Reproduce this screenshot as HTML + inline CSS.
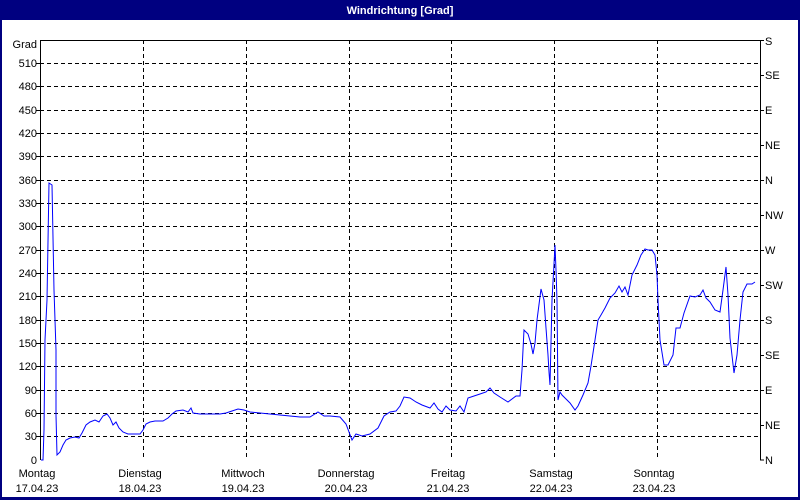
<!DOCTYPE html>
<html><head><meta charset="utf-8"><style>
html,body{margin:0;padding:0;width:800px;height:500px;overflow:hidden;background:#fff}
svg{display:block}
text{font-family:"Liberation Sans",sans-serif;font-size:11px;fill:#000}
</style></head><body>
<svg width="800" height="500" xmlns="http://www.w3.org/2000/svg">
<rect x="0" y="0" width="800" height="500" fill="#000080"/>
<rect x="2" y="20" width="796" height="477" fill="#fff"/>
<text x="400" y="14" text-anchor="middle" style="fill:#fff;font-weight:bold">Windrichtung [Grad]</text>
<g stroke="#000" stroke-width="1" stroke-dasharray="4,3" shape-rendering="crispEdges">
<line x1="40" y1="63.5" x2="760" y2="63.5"/><line x1="40" y1="86.5" x2="760" y2="86.5"/>
<line x1="40" y1="110.5" x2="760" y2="110.5"/><line x1="40" y1="133.5" x2="760" y2="133.5"/>
<line x1="40" y1="156.5" x2="760" y2="156.5"/><line x1="40" y1="180.5" x2="760" y2="180.5"/>
<line x1="40" y1="203.5" x2="760" y2="203.5"/><line x1="40" y1="226.5" x2="760" y2="226.5"/>
<line x1="40" y1="250.5" x2="760" y2="250.5"/><line x1="40" y1="273.5" x2="760" y2="273.5"/>
<line x1="40" y1="296.5" x2="760" y2="296.5"/><line x1="40" y1="320.5" x2="760" y2="320.5"/>
<line x1="40" y1="343.5" x2="760" y2="343.5"/><line x1="40" y1="366.5" x2="760" y2="366.5"/>
<line x1="40" y1="390.5" x2="760" y2="390.5"/><line x1="40" y1="413.5" x2="760" y2="413.5"/>
<line x1="40" y1="436.5" x2="760" y2="436.5"/>
<line x1="143.5" y1="40" x2="143.5" y2="460"/><line x1="246.5" y1="40" x2="246.5" y2="460"/>
<line x1="349.5" y1="40" x2="349.5" y2="460"/><line x1="451.5" y1="40" x2="451.5" y2="460"/>
<line x1="554.5" y1="40" x2="554.5" y2="460"/><line x1="657.5" y1="40" x2="657.5" y2="460"/>
</g>
<g stroke="#000" shape-rendering="crispEdges">
<polyline points="40.5,460 40.5,40.5 760.5,40.5 760.5,460" fill="none"/>
<line x1="36" y1="63.5" x2="40" y2="63.5"/><line x1="36" y1="86.5" x2="40" y2="86.5"/><line x1="36" y1="110.5" x2="40" y2="110.5"/><line x1="36" y1="133.5" x2="40" y2="133.5"/><line x1="36" y1="156.5" x2="40" y2="156.5"/><line x1="36" y1="180.5" x2="40" y2="180.5"/><line x1="36" y1="203.5" x2="40" y2="203.5"/><line x1="36" y1="226.5" x2="40" y2="226.5"/><line x1="36" y1="250.5" x2="40" y2="250.5"/><line x1="36" y1="273.5" x2="40" y2="273.5"/><line x1="36" y1="296.5" x2="40" y2="296.5"/><line x1="36" y1="320.5" x2="40" y2="320.5"/><line x1="36" y1="343.5" x2="40" y2="343.5"/><line x1="36" y1="366.5" x2="40" y2="366.5"/><line x1="36" y1="390.5" x2="40" y2="390.5"/><line x1="36" y1="413.5" x2="40" y2="413.5"/><line x1="36" y1="436.5" x2="40" y2="436.5"/>
<line x1="760" y1="40.5" x2="764" y2="40.5"/><line x1="760" y1="75.5" x2="764" y2="75.5"/><line x1="760" y1="110.5" x2="764" y2="110.5"/><line x1="760" y1="145.5" x2="764" y2="145.5"/><line x1="760" y1="180.5" x2="764" y2="180.5"/><line x1="760" y1="215.5" x2="764" y2="215.5"/><line x1="760" y1="250.5" x2="764" y2="250.5"/><line x1="760" y1="285.5" x2="764" y2="285.5"/><line x1="760" y1="320.5" x2="764" y2="320.5"/><line x1="760" y1="355.5" x2="764" y2="355.5"/><line x1="760" y1="390.5" x2="764" y2="390.5"/><line x1="760" y1="425.5" x2="764" y2="425.5"/><line x1="760" y1="460" x2="764" y2="460"/>
</g>
<g text-anchor="end">
<text x="37" y="48">Grad</text>
<text x="37" y="67">510</text><text x="37" y="90">480</text><text x="37" y="114">450</text><text x="37" y="137">420</text><text x="37" y="160">390</text><text x="37" y="184">360</text><text x="37" y="207">330</text><text x="37" y="230">300</text><text x="37" y="254">270</text><text x="37" y="277">240</text><text x="37" y="300">210</text><text x="37" y="324">180</text><text x="37" y="347">150</text><text x="37" y="370">120</text><text x="37" y="394">90</text><text x="37" y="417">60</text><text x="37" y="440">30</text><text x="37" y="464">0</text>
</g>
<g>
<text x="765" y="45">S</text><text x="765" y="79">SE</text><text x="765" y="114">E</text><text x="765" y="149">NE</text><text x="765" y="184">N</text><text x="765" y="219">NW</text><text x="765" y="254">W</text><text x="765" y="289">SW</text><text x="765" y="324">S</text><text x="765" y="359">SE</text><text x="765" y="394">E</text><text x="765" y="429">NE</text><text x="765" y="464">N</text>
</g>
<g text-anchor="middle">
<text x="37" y="477">Montag</text><text x="37" y="492">17.04.23</text>
<text x="140" y="477">Dienstag</text><text x="140" y="492">18.04.23</text>
<text x="243" y="477">Mittwoch</text><text x="243" y="492">19.04.23</text>
<text x="346" y="477">Donnerstag</text><text x="346" y="492">20.04.23</text>
<text x="448" y="477">Freitag</text><text x="448" y="492">21.04.23</text>
<text x="551" y="477">Samstag</text><text x="551" y="492">22.04.23</text>
<text x="654" y="477">Sonntag</text><text x="654" y="492">23.04.23</text>
</g>
<polyline fill="none" stroke="#0000ff" stroke-width="1" points="41,460 43,460 44,430 45,340 47,300 49,183 52,185 54,290 56,350 56,415 57,455 60,452 63,445 66,440 70,438 75,437 79,438 82,433 86,425 90,422 95,420 99,422 103,416 107,414 110,418 113,425 116,422 119,428 123,432 128,434 134,434 140,434 143,430 146,424 150,422 155,421 163,421 168,418 172,414 176,411 183,410 188,412 191,408 193,413 200,414 212,414 220,414 226,413 232,411 238,409 244,410 250,412 260,413 270,414 280,415 290,416 300,417 310,417 318,412 324,416 330,416 340,417 346,424 352,440 356,434 362,436 370,434 378,428 384,416 390,412 396,411 400,406 404,397 410,398 416,402 422,405 430,408 434,403 438,409 442,412 446,406 450,410 456,411 460,406 464,412 468,398 474,396 480,394 486,392 490,388 494,393 500,397 508,402 516,396 520,396 522,370 524,330 528,334 531,344 533,354 535,343 537,320 541,289 544,300 546,328 548,355 549,372 550,385 552,300 554,264 555,245 556,270 557,300 558,400 560,392 562,395 565,398 570,403 575,410 578,406 583,395 588,383 591,366 595,340 598,320 601,315 605,308 610,298 615,293 619,286 622,292 625,287 628,295 632,275 637,265 641,255 645,249 648,250 652,250 655,255 657,275 658,300 660,340 664,365 668,365 673,355 676,328 680,328 684,313 690,296 695,297 700,295 703,290 706,298 710,302 715,310 720,312 723,290 726,267 728,295 730,338 734,373 737,355 740,320 743,292 747,284 752,284 755,282"/>
</svg>
</body></html>
